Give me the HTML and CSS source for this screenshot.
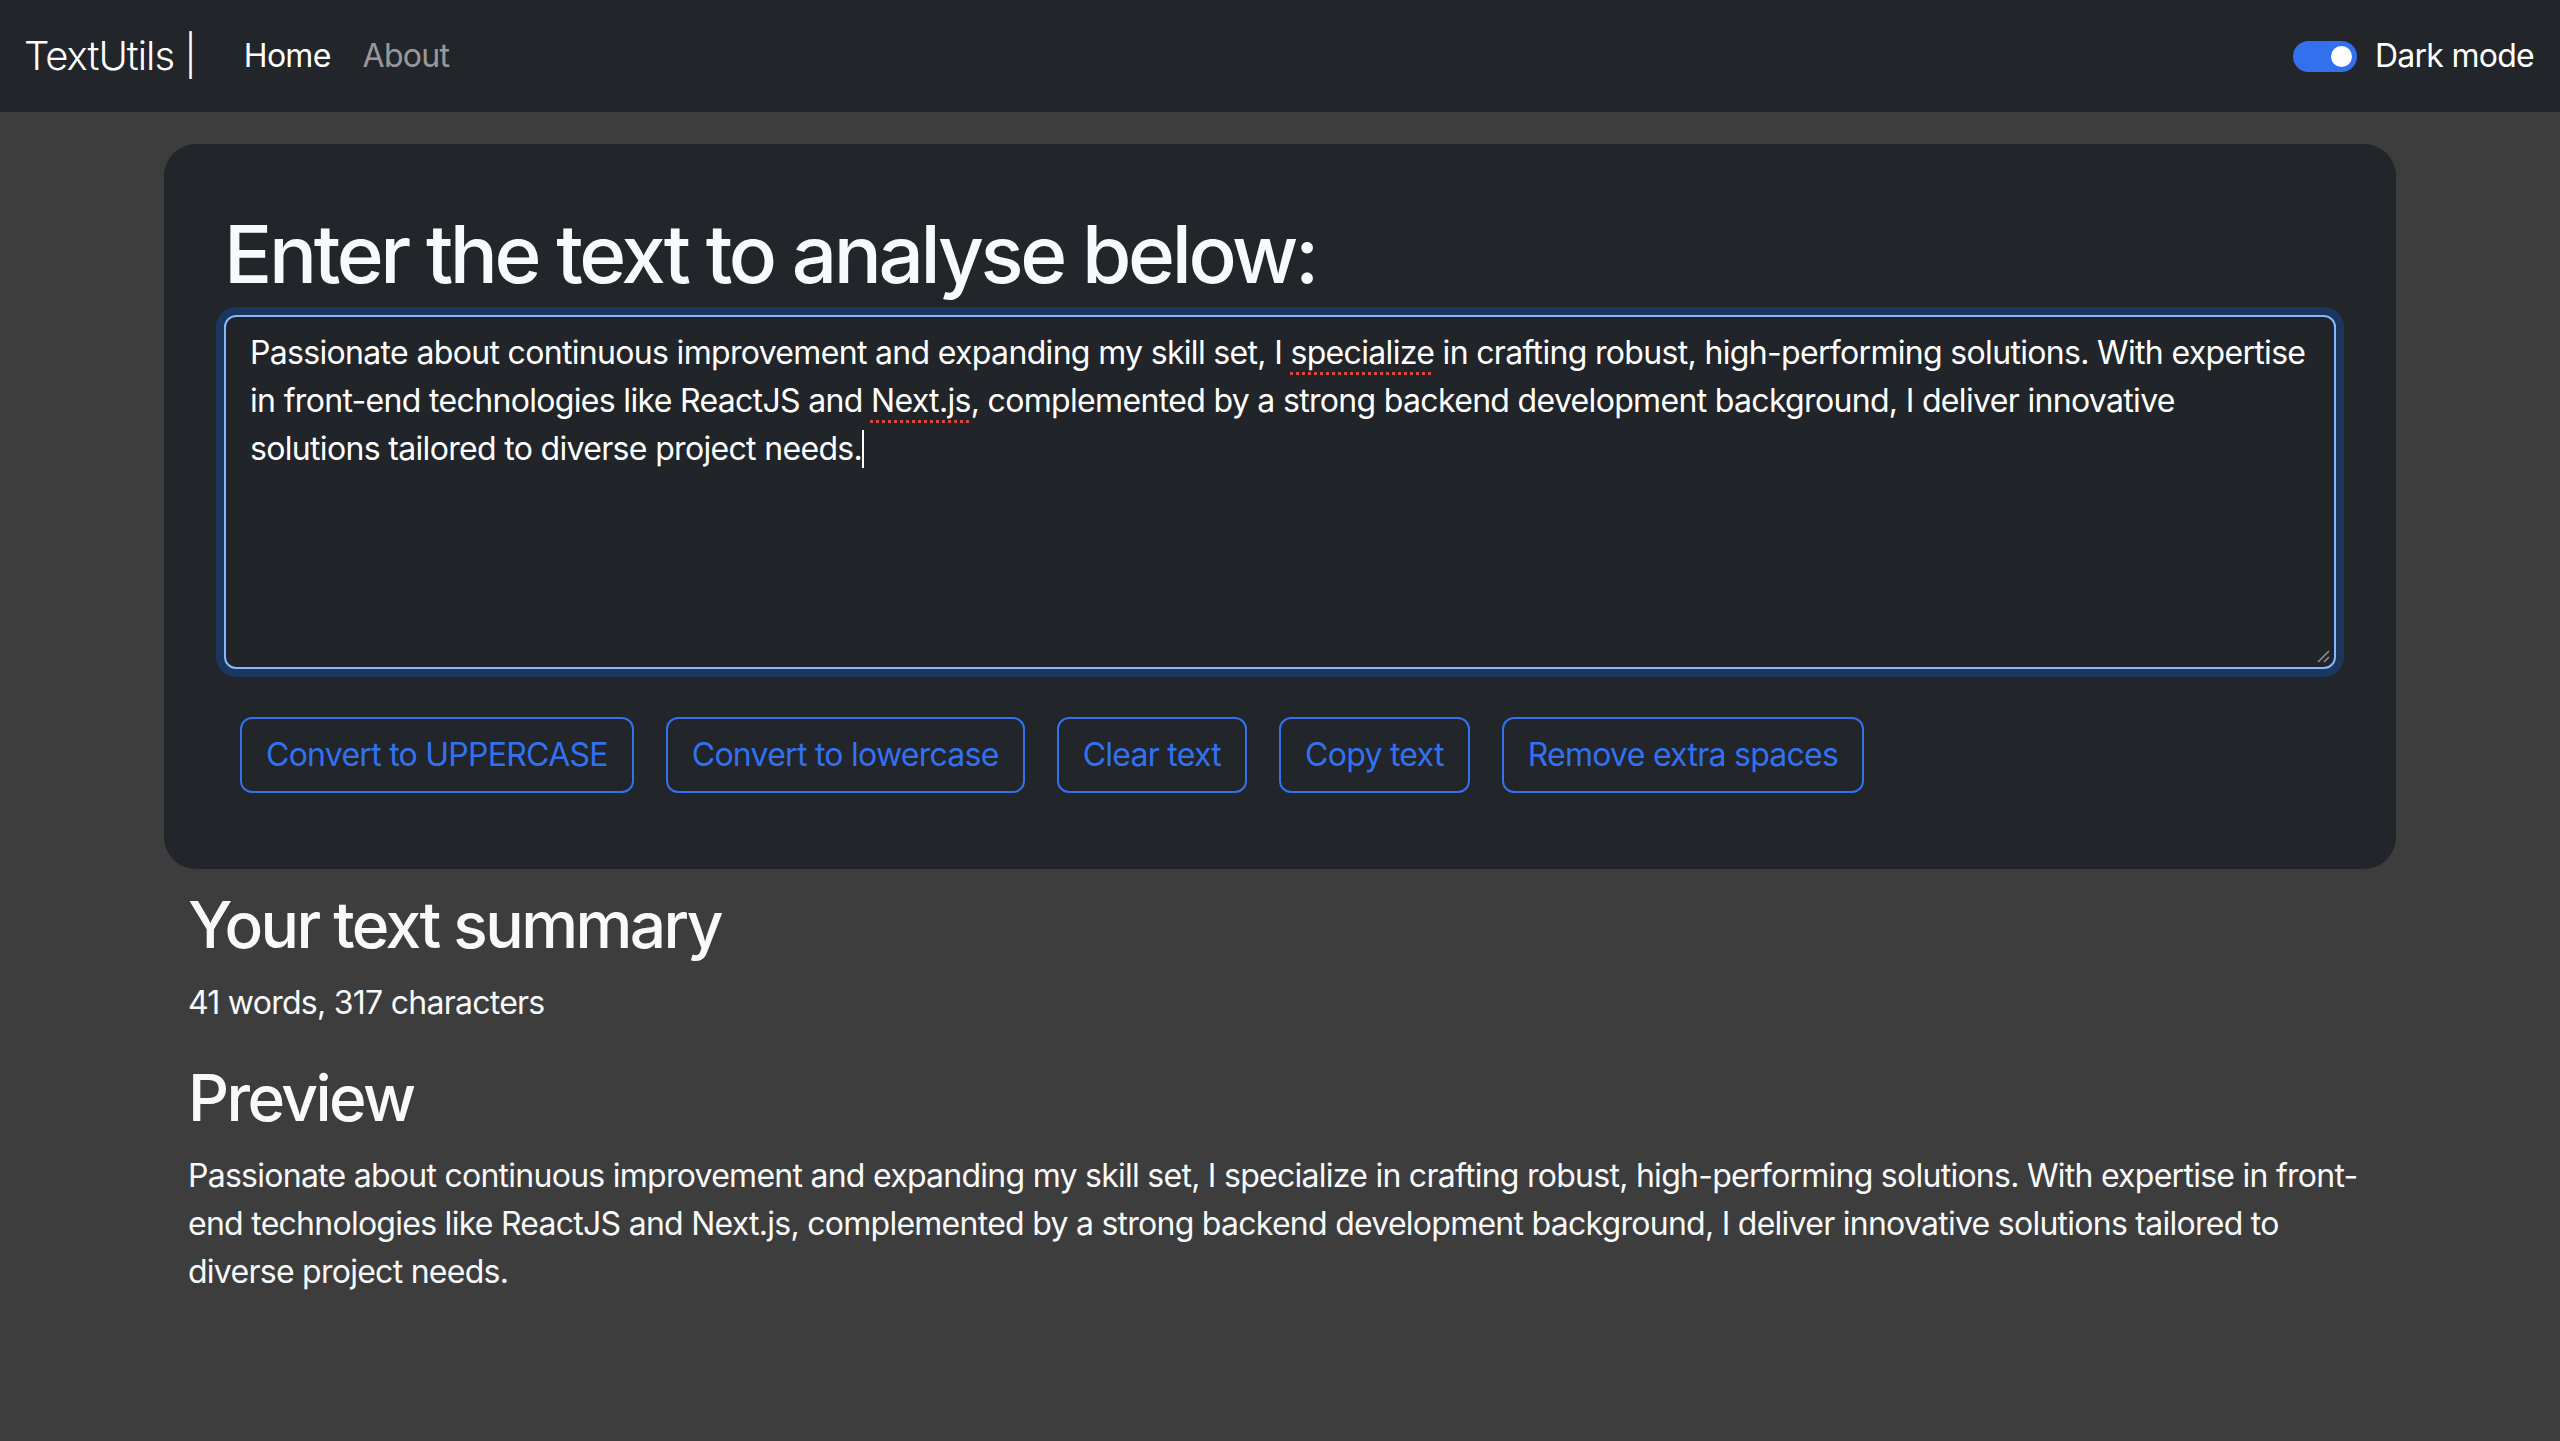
FILE: index.html
```html
<!DOCTYPE html>
<html lang="en">
<head>
<meta charset="utf-8">
<title>TextUtils</title>
<link rel="stylesheet" href="styles.css">
</head>
<body>
<nav class="navbar">
  <a class="brand" href="#">TextUtils |</a>
  <ul class="nav-links">
    <li><a class="nav-link active" href="#">Home</a></li>
    <li><a class="nav-link" href="#">About</a></li>
  </ul>
  <div class="switch">
    <span class="switch-track"></span>
    <span class="switch-label">Dark mode</span>
  </div>
</nav>

<main class="container">
  <section class="card">
    <h1 class="card-title">Enter the text to analyse below:</h1>
    <div class="textbox" role="textbox" aria-multiline="true">Passionate about continuous improvement and expanding my skill set, I <span class="misspelt">specialize</span> in crafting robust, high-performing solutions. With expertise in front-end technologies like ReactJS and <span class="misspelt">Next.js</span>, complemented by a strong backend development background, I deliver innovative solutions tailored to diverse project needs.<span class="caret"></span><svg class="resize" viewBox="0 0 14 14" width="14" height="14"><path d="M2 13 L13 2 M8 13 L13 8" stroke="#8a8d91" stroke-width="1.6" fill="none"/></svg></div>
    <div class="actions">
      <button class="btn">Convert to UPPERCASE</button>
      <button class="btn">Convert to lowercase</button>
      <button class="btn">Clear text</button>
      <button class="btn">Copy text</button>
      <button class="btn">Remove extra spaces</button>
    </div>
  </section>

  <section class="summary">
    <h2>Your text summary</h2>
    <p>41 words, 317 characters</p>
    <h2>Preview</h2>
    <p>Passionate about continuous improvement and expanding my skill set, I specialize in crafting robust, high-performing solutions. With expertise in front-end technologies like ReactJS and Next.js, complemented by a strong backend development background, I deliver innovative solutions tailored to diverse project needs.</p>
  </section>
</main>
</body>
</html>
```

FILE: styles.css
```css
* { box-sizing: border-box; }

html, body {
  margin: 0;
  padding: 0;
}

body {
  background: #3d3d3d;
  color: #fff;
  font-family: Inter, "Noto Sans", "Liberation Sans", sans-serif;
  font-size: 32px;
  line-height: 48px;
  letter-spacing: -0.023em;
  min-height: 1441px;
}

/* ---------- navbar ---------- */
.navbar {
  height: 112px;
  background: #222529;
  display: flex;
  align-items: center;
  padding: 0 26px 0 24px;
}

.brand {
  color: #fff;
  text-decoration: none;
  font-size: 40px;
  line-height: 60px;
  font-weight: 300;
  letter-spacing: -0.025em;
  margin-right: 32px;
}

.nav-links {
  list-style: none;
  display: flex;
  margin: 0;
  padding: 0;
  flex: 1;
}

.nav-link {
  display: block;
  padding: 0 16px;
  color: rgba(255, 255, 255, 0.55);
  text-decoration: none;
  line-height: 48px;
}

.nav-link.active { color: #fff; }

.switch {
  display: flex;
  align-items: center;
}

.switch-track {
  position: relative;
  width: 64px;
  height: 31px;
  border-radius: 16px;
  background: #3270ee;
  margin-right: 18px;
}

.switch-track::after {
  content: "";
  position: absolute;
  right: 5px;
  top: 5px;
  width: 21px;
  height: 21px;
  border-radius: 50%;
  background: #fff;
}

.switch-label { color: #fff; }

/* ---------- container / card ---------- */
.container {
  width: 2280px;
  margin: 32px auto 0;
  padding: 0 24px;
}

.card {
  background: #222529;
  border-radius: 32px;
  padding: 62px 60px 60px;
}

.card-title {
  margin: 0 0 13px;
  font-size: 80px;
  line-height: 96px;
  font-weight: 500;
  color: #f8f9fa;
  letter-spacing: -0.042em;
}

.textbox {
  position: relative;
  height: 354px;
  border: 2px solid #86b7fe;
  border-radius: 12px;
  box-shadow: 0 0 0 8px rgba(13, 110, 253, 0.25);
  background: #212529;
  padding: 12px 24px;
  color: #fff;
  letter-spacing: -0.021em;
}

.misspelt {
  text-decoration: underline dotted #d9453a;
  text-decoration-thickness: 3px;
  text-underline-offset: 8px;
}

.caret {
  display: inline-block;
  width: 2px;
  height: 38px;
  background: #fff;
  vertical-align: -8px;
}

.resize {
  position: absolute;
  right: 4px;
  bottom: 4px;
}

.actions {
  display: flex;
  flex-wrap: wrap;
  gap: 32px;
  margin: 48px 16px 16px;
}

.btn {
  font: inherit;
  letter-spacing: inherit;
  background: transparent;
  color: #3272f0;
  border: 2px solid #3272f0;
  border-radius: 12px;
  padding: 12px 24px;
  line-height: 48px;
}

/* ---------- summary ---------- */
.summary {
  padding: 17px 24px 0;
}

.summary h2 {
  margin: 0 0 16px;
  font-size: 64px;
  line-height: 77px;
  font-weight: 500;
  color: #f8f9fa;
  letter-spacing: -0.04em;
}

.summary p {
  margin: 0 0 32px;
  color: #f8f9fa;
}
```
